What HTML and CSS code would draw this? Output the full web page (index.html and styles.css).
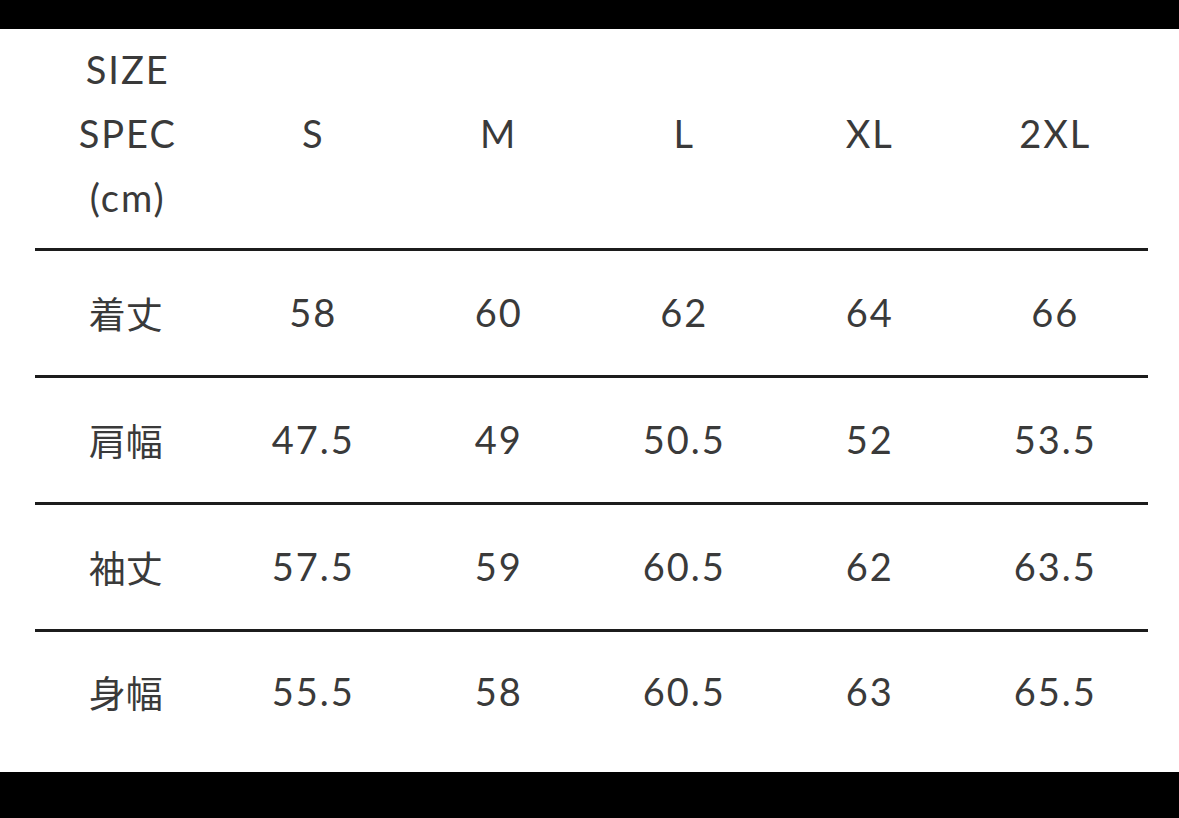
FILE: index.html
```html
<!DOCTYPE html>
<html lang="ja">
<head>
<meta charset="utf-8">
<title>SIZE SPEC</title>
<link rel="stylesheet" href="styles.css">
</head>
<body>
<div class="page">
  <div class="table">
    <div class="row head">
      <div class="cell label-head">SIZE<br>SPEC<br>(cm)</div>
      <div class="cell">S</div>
      <div class="cell">M</div>
      <div class="cell">L</div>
      <div class="cell">XL</div>
      <div class="cell">2XL</div>
    </div>
    <div class="row body">
      <div class="cell jp">着丈</div>
      <div class="cell">58</div>
      <div class="cell">60</div>
      <div class="cell">62</div>
      <div class="cell">64</div>
      <div class="cell">66</div>
    </div>
    <div class="row body">
      <div class="cell jp">肩幅</div>
      <div class="cell">47.5</div>
      <div class="cell">49</div>
      <div class="cell">50.5</div>
      <div class="cell">52</div>
      <div class="cell">53.5</div>
    </div>
    <div class="row body">
      <div class="cell jp">袖丈</div>
      <div class="cell">57.5</div>
      <div class="cell">59</div>
      <div class="cell">60.5</div>
      <div class="cell">62</div>
      <div class="cell">63.5</div>
    </div>
    <div class="row body last">
      <div class="cell jp">身幅</div>
      <div class="cell">55.5</div>
      <div class="cell">58</div>
      <div class="cell">60.5</div>
      <div class="cell">63</div>
      <div class="cell">65.5</div>
    </div>
  </div>
</div>
</body>
</html>
```
FILE: styles.css
```css
html, body {
  margin: 0;
  padding: 0;
  background: #000;
}
body {
  width: 1179px;
  height: 818px;
  overflow: hidden;
}
.page {
  margin-top: 29px;
  height: 743px;
  background: #fff;
  box-sizing: border-box;
  padding: 8px 31px 0 35px;
}
.table {
  width: 1113px;
  font-family: "Lato", "Noto Sans CJK JP", sans-serif;
  font-size: 38px;
  font-weight: 400;
  color: #3a3a3a;
  letter-spacing: 2px;
}
.row {
  display: grid;
  grid-template-columns: repeat(6, 1fr);
  align-items: center;
  justify-items: center;
}
.head {
  height: 211px;
  align-items: start;
}
.head .cell {
  line-height: 64px;
  margin-top: 64px;
}
.head .label-head {
  margin-top: 0;
  text-align: center;
}
.body {
  border-top: 3px solid #1c1c1c;
  height: 124px;
}
.body .cell {
  padding-bottom: 3px;
}
.body.last {
  height: 120px;
}
.cell {
  text-align: center;
  white-space: nowrap;
}
.body .jp {
  font-family: "Noto Sans CJK JP", sans-serif;
  font-size: 37px;
  letter-spacing: 0;
  font-weight: 400;
  color: #3a3a3a;
  margin-right: 4px;
  padding-bottom: 1px;
}
```
